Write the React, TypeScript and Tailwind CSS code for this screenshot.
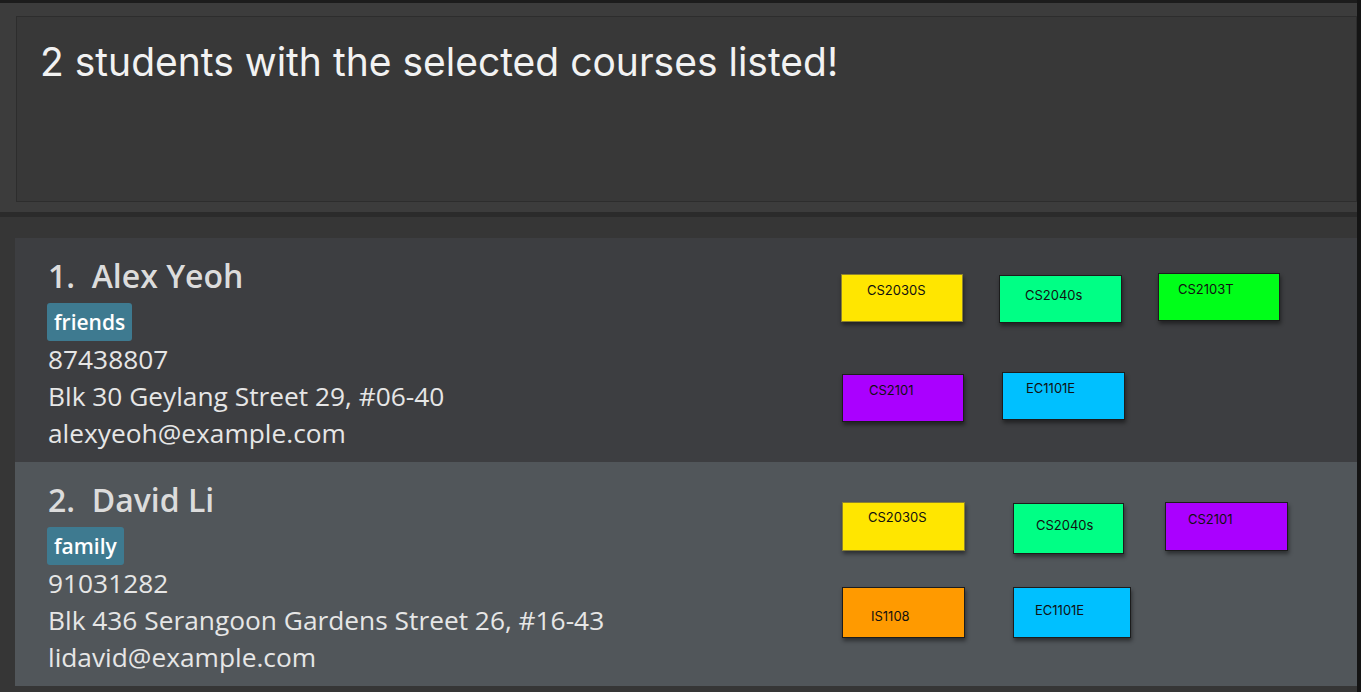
import React from 'react';

type Chip = {
  code: string;
  color: string;
  box: string;
  text: string;
};

type Student = {
  index: number;
  name: string;
  tag: string;
  phone: string;
  address: string;
  email: string;
  bg: string;
  rows: Chip[][];
};

const students: Student[] = [
  {
    index: 1,
    name: 'Alex Yeoh',
    tag: 'friends',
    phone: '87438807',
    address: 'Blk 30 Geylang Street 29, #06-40',
    email: 'alexyeoh@example.com',
    bg: 'bg-[#3d3e41]',
    rows: [
      [
        { code: 'CS2030S', color: 'bg-[#ffe600] border-[#8c8230]', box: 'w-[122px] h-[48px] mt-[36px]', text: 'pl-[25px] pt-[7px]' },
        { code: 'CS2040s', color: 'bg-[#00ff85] border-[#1c1c1c]', box: 'w-[123px] h-[48px] mt-[37px] ml-[36px]', text: 'pl-[25px] pt-[11px]' },
        { code: 'CS2103T', color: 'bg-[#00ff19] border-[#1c1c1c]', box: 'w-[122px] h-[48px] mt-[35px] ml-[36px]', text: 'pl-[19px] pt-[7px]' },
      ],
      [
        { code: 'CS2101', color: 'bg-[#aa00ff] border-[#1c1c1c]', box: 'w-[122px] h-[48px] mt-[51px] ml-[1px]', text: 'pl-[26px] pt-[7px]' },
        { code: 'EC1101E', color: 'bg-[#00c0ff] border-[#1c1c1c]', box: 'w-[123px] h-[48px] mt-[49px] ml-[38px]', text: 'pl-[23px] pt-[7px]' },
      ],
    ],
  },
  {
    index: 2,
    name: 'David Li',
    tag: 'family',
    phone: '91031282',
    address: 'Blk 436 Serangoon Gardens Street 26, #16-43',
    email: 'lidavid@example.com',
    bg: 'bg-[#51565a]',
    rows: [
      [
        { code: 'CS2030S', color: 'bg-[#ffe600] border-[#8c8230]', box: 'w-[123px] h-[49px] mt-[40px] ml-[1px]', text: 'pl-[25px] pt-[6px]' },
        { code: 'CS2040s', color: 'bg-[#00ff85] border-[#1c1c1c]', box: 'w-[111px] h-[51px] mt-[41px] ml-[48px]', text: 'pl-[22px] pt-[13px]' },
        { code: 'CS2101', color: 'bg-[#aa00ff] border-[#1c1c1c]', box: 'w-[123px] h-[49px] mt-[40px] ml-[41px]', text: 'pl-[22px] pt-[8px]' },
      ],
      [
        { code: 'IS1108', color: 'bg-[#ff9a00] border-[#1c1c1c]', box: 'w-[123px] h-[51px] mt-[33px] ml-[1px]', text: 'pl-[28px] pt-[20px]' },
        { code: 'EC1101E', color: 'bg-[#00c0ff] border-[#1c1c1c]', box: 'w-[118px] h-[51px] mt-[33px] ml-[48px]', text: 'pl-[21px] pt-[14px]' },
      ],
    ],
  },
];

const CourseChip: React.FC<{ chip: Chip }> = ({ chip }) => (
  <div
    className={`${chip.box} ${chip.color} border shadow-[1px_3px_4px_rgba(0,0,0,0.45)] shrink-0`}
  >
    <div
      className={`${chip.text} text-[13px] leading-[16px] text-[#111] font-['Inter','Liberation_Sans',sans-serif]`}
    >
      {chip.code}
    </div>
  </div>
);

const StudentCard: React.FC<{ student: Student }> = ({ student }) => (
  <div className={`${student.bg} h-[224px] flex`}>
    <div className="w-[826px] pl-[33px] pt-[18px] font-['Open_Sans','Noto_Sans',sans-serif] text-[#e6e6e6]">
      <div className="text-[32px] leading-[40px] font-semibold text-[#dcdcdc]">
        {student.index}.&nbsp;&nbsp;{student.name}
      </div>
      <div className="mt-[7px] flex -ml-[1px]">
        <span className="bg-[#3e7a90] rounded-[3px] px-[7px] h-[38px] text-[21px] leading-[38px] font-semibold text-white">
          {student.tag}
        </span>
      </div>
      <div className="text-[26.3px] leading-[37px]">{student.phone}</div>
      <div className="text-[26.3px] leading-[37px]">{student.address}</div>
      <div className="text-[26.3px] leading-[37px]">{student.email}</div>
    </div>
    <div className="flex flex-col">
      {student.rows.map((row, i) => (
        <div key={i} className="flex items-start">
          {row.map((chip) => (
            <CourseChip key={chip.code} chip={chip} />
          ))}
        </div>
      ))}
    </div>
  </div>
);

export default function App() {
  return (
    <div className="w-[1361px] h-[692px] bg-[#141414] flex overflow-hidden">
      <div className="w-[1357px] flex flex-col">
        <div className="h-[3px] bg-[#1c1c1c]" />
        <div className="bg-[#3c3c3c] pt-[13px] pl-[16px] pb-[10px]">
          <div className="h-[186px] bg-[#383838] border border-[#2d2d2d] pl-[23px] pt-[22px]">
            <p className="text-[39px] leading-[46px] text-[#f2f2f2] font-['Inter','Liberation_Sans',sans-serif]">
              2 students with the selected courses listed!
            </p>
          </div>
        </div>
        <div className="h-[5px] bg-[#2b2b2b]" />
        <div className="flex-1 bg-[#363636] pt-[21px] pl-[15px]">
          {students.map((s) => (
            <StudentCard key={s.index} student={s} />
          ))}
        </div>
      </div>
    </div>
  );
}
